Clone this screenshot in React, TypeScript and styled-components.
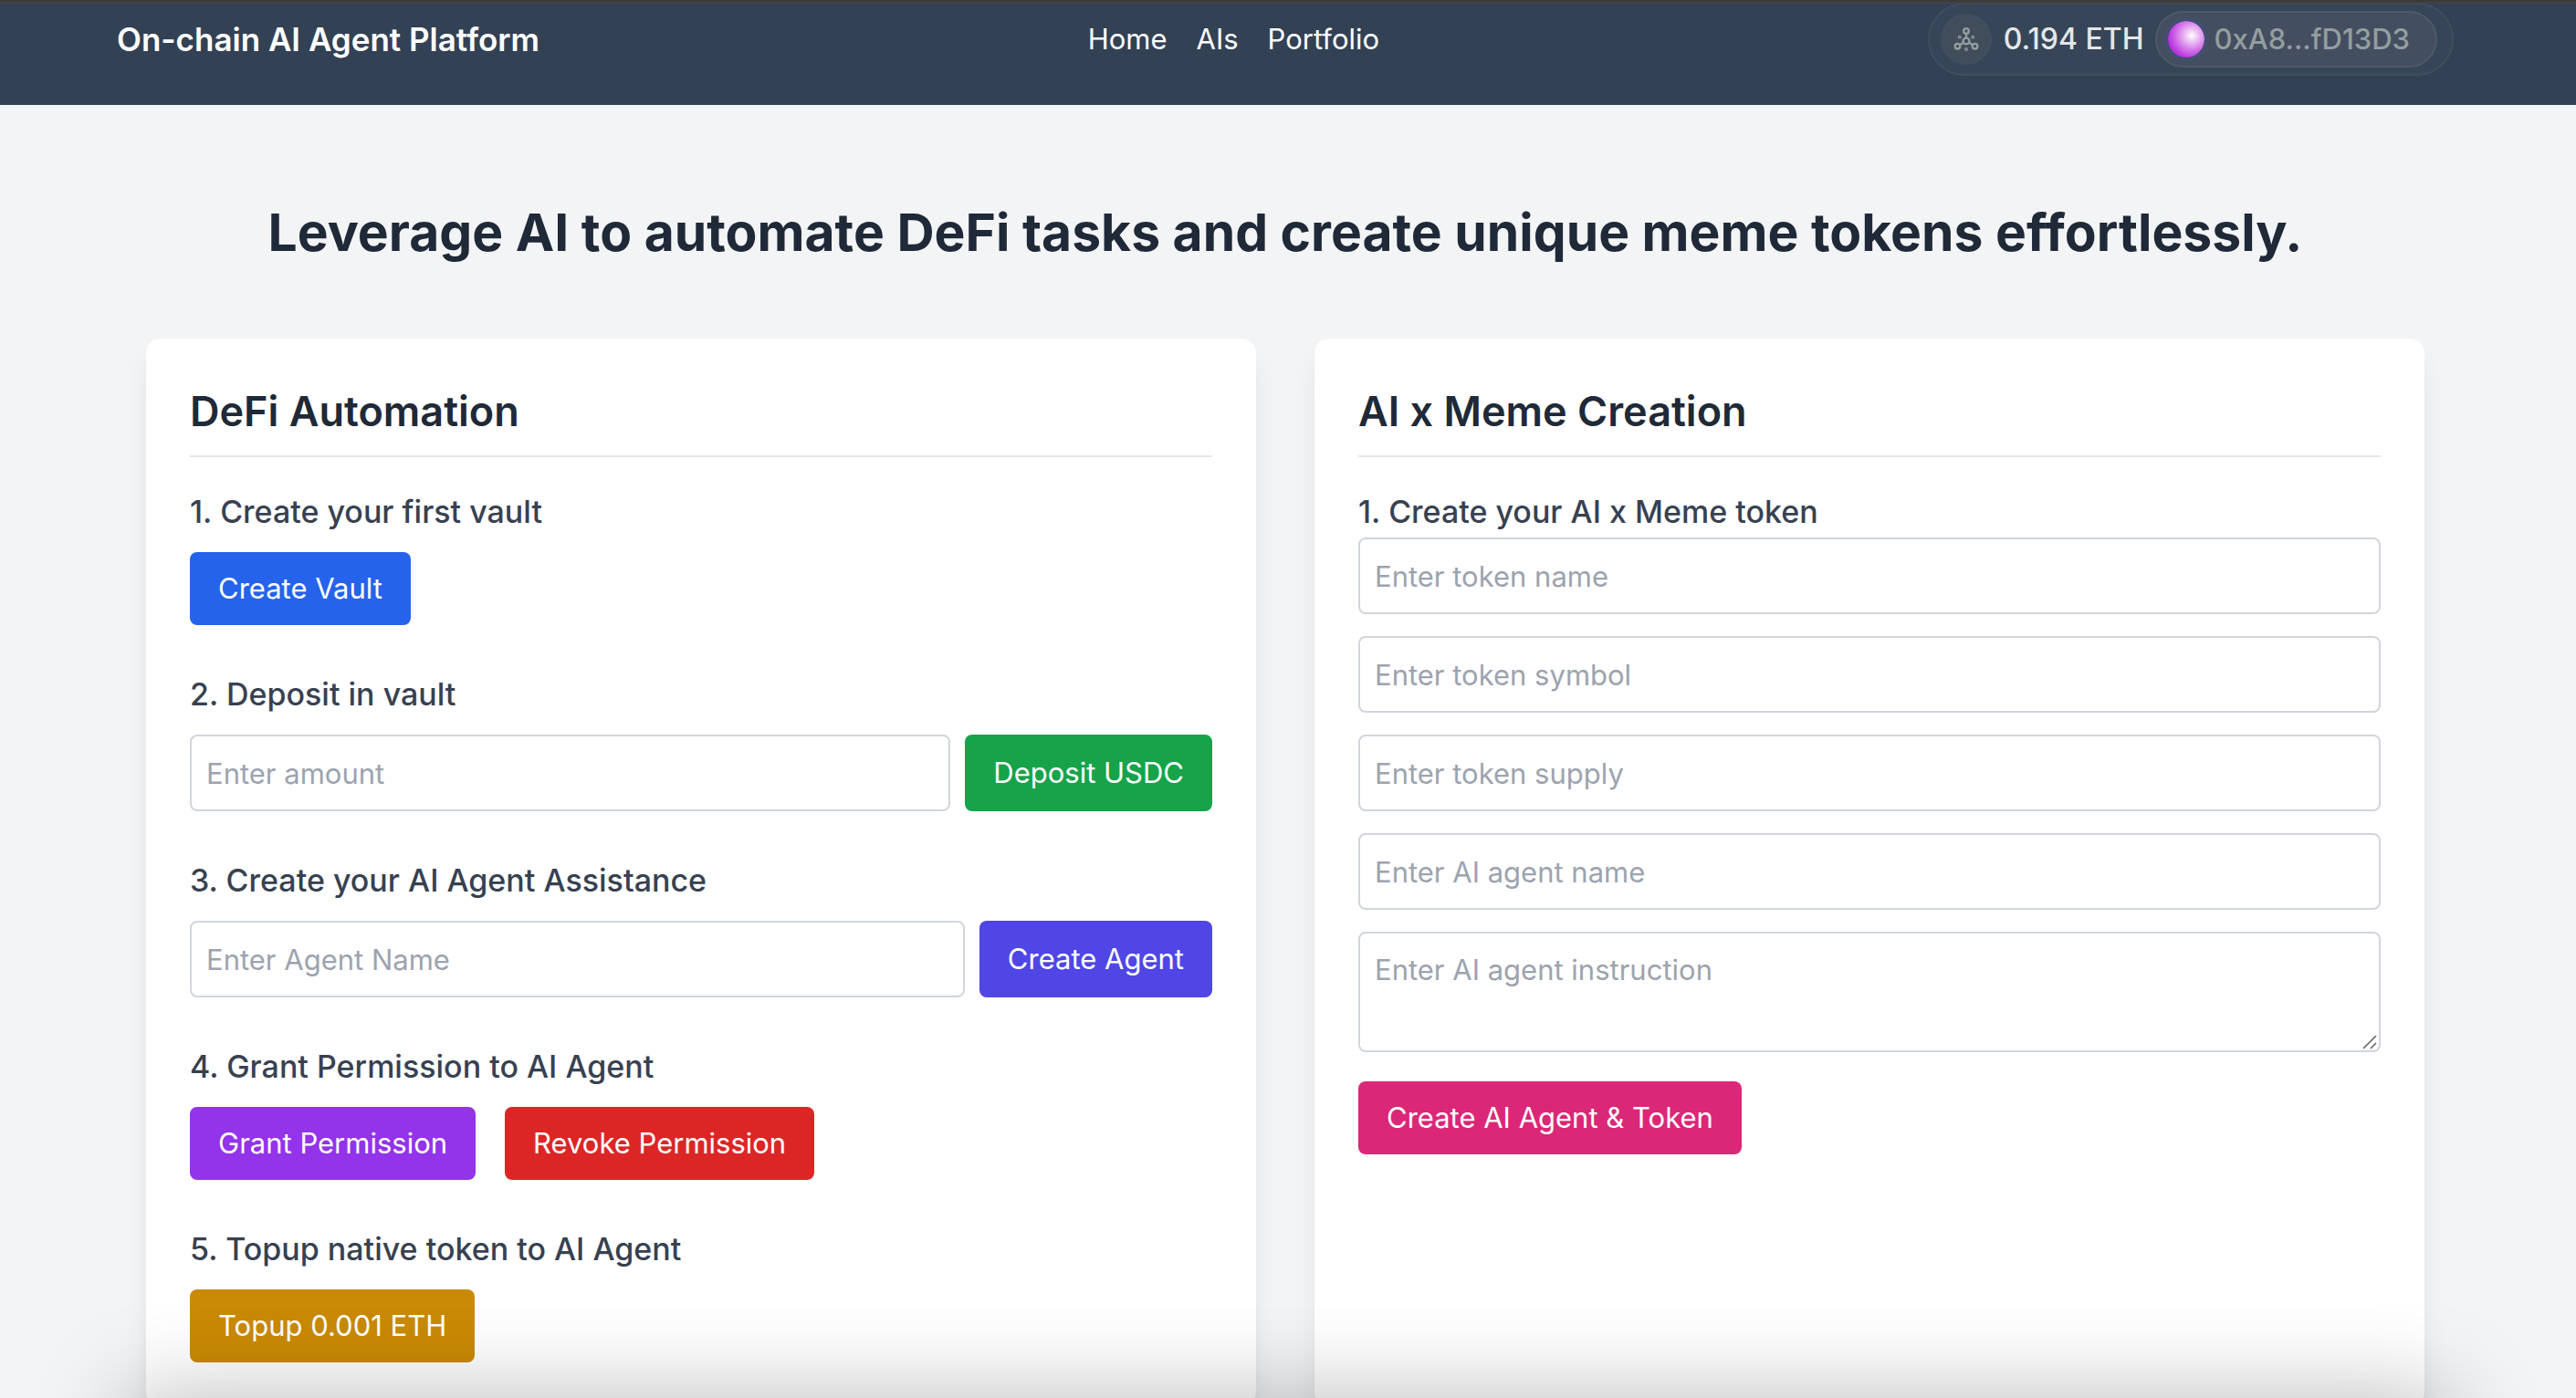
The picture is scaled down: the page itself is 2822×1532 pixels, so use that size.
import React from "react";
import styled, { createGlobalStyle } from "styled-components";

const GlobalStyle = createGlobalStyle`
  *, *::before, *::after { box-sizing: border-box; }
  html, body { margin: 0; padding: 0; }
  body {
    background: #f3f4f6;
    color: #1f2937;
    font-family: Inter, "Liberation Sans", Arial, sans-serif;
    font-size: 31px;
    line-height: 48px;
  }
  h1, h2, h3, p { margin: 0; }
  button, input, textarea { font: inherit; }
`;

const Page = styled.div`
  position: relative;
  height: 100vh;
  overflow: hidden;
`;

const TopEdge = styled.div`
  position: absolute;
  inset: 0 0 auto 0;
  height: 4px;
  background: #434343;
  border-top: 2px solid #3a3a3a;
  z-index: 2;
`;

const BottomShade = styled.div`
  position: absolute;
  left: 0;
  right: 0;
  bottom: 0;
  height: 100px;
  pointer-events: none;
  overflow: hidden;
  z-index: 2;

  &::after {
    content: "";
    position: absolute;
    left: 140px;
    right: 140px;
    top: 100px;
    height: 120px;
    box-shadow: 0 0 100px 4px rgba(0, 0, 0, 0.26);
  }
`;

const Header = styled.header`
  display: flex;
  align-items: center;
  justify-content: space-between;
  padding: 3px 134px 32px 128px;
  background: #334155;
  color: #ffffff;
`;

const Brand = styled.a`
  color: inherit;
  text-decoration: none;
  font-size: 35px;
  font-weight: 600;
`;

const Nav = styled.nav`
  display: flex;
  gap: 32px;
`;

const NavLink = styled.a`
  color: inherit;
  text-decoration: none;
`;

const Wallet = styled.div`
  display: flex;
  align-items: center;
  gap: 13px;
  height: 80px;
  padding: 0 16px 0 12px;
  border: 2px solid #3f4e5f;
  border-radius: 40px;
  background: #374558;
  color: #e4e7e7;
  font-size: 32px;
  font-weight: 500;
`;

const NetworkBadge = styled.span`
  display: grid;
  place-items: center;
  width: 56px;
  height: 56px;
  border: 4px solid #414e60;
  border-radius: 50%;
  background: #404d5b;
`;

const Account = styled.button`
  display: flex;
  align-items: center;
  gap: 6px;
  height: 62px;
  margin: 0;
  padding: 0 28px 0 8px;
  border: 2px solid #4d596a;
  border-radius: 31px;
  background: #434e61;
  color: #949e9e;
  font-size: 31px;
  font-weight: 500;
`;

const Orb = styled.span`
  width: 48px;
  height: 48px;
  border: 4px solid #434e70;
  border-radius: 50%;
  background: radial-gradient(circle at 65% 40%, #ffffff 0%, #f0cdf6 16%, #d77fea 42%, #b935df 70%, #b01fdc 100%) padding-box;
`;

const Main = styled.main`
  padding: 104px 166px 64px 160px;
`;

const Title = styled.h1`
  margin-bottom: 80px;
  text-align: center;
  font-size: 57px;
  line-height: 72px;
  font-weight: 700;
`;

const Columns = styled.div`
  display: grid;
  grid-template-columns: repeat(2, minmax(0, 1fr));
  gap: 64px;
`;

const Card = styled.section`
  padding: 48px;
  border-radius: 16px;
  background: #ffffff;
  box-shadow: 0 20px 30px -6px rgba(0, 0, 0, 0.1), 0 8px 12px -8px rgba(0, 0, 0, 0.1);
`;

const CardTitle = styled.h2`
  margin-bottom: 32px;
  padding-bottom: 16px;
  border-bottom: 2px solid #e5e7eb;
  font-size: 45px;
  line-height: 64px;
  font-weight: 600;
`;

const Steps = styled.div`
  display: grid;
  gap: 48px;
`;

const Step = styled.form<{ $gap?: number }>`
  display: flex;
  flex-direction: column;
  gap: ${(p) => p.$gap ?? 16}px;
`;

const StepTitle = styled.h3`
  color: #374151;
  font-size: 34px;
  line-height: 56px;
  font-weight: 500;
`;

const Row = styled.div<{ $gap?: number }>`
  display: flex;
  gap: ${(p) => p.$gap ?? 16}px;
`;

const Fields = styled.div`
  display: flex;
  flex-direction: column;
  gap: 24px;
  margin-bottom: 32px;
`;

const Input = styled.input`
  flex: 1;
  width: 100%;
  min-width: 0;
  padding: 16px;
  border: 2px solid #d1d5db;
  border-radius: 8px;
  background: #ffffff;
  color: #1f2937;
  line-height: 48px;
  height: 84px;

  &::placeholder { color: #9ca3af; opacity: 1; }
`;

const AreaWrap = styled.div`
  position: relative;
  display: flex;
`;

const Area = styled(Input)`
  display: block;
  height: 132px;
  resize: vertical;

  &::-webkit-resizer { display: none; }
`;

const Grip = styled.svg`
  position: absolute;
  right: 4px;
  bottom: 3px;
  pointer-events: none;
`;

const Button = styled.button<{ $color: string }>`
  flex: none;
  padding: 16px 31px;
  border: 0;
  border-radius: 8px;
  background: ${(p) => p.$color};
  color: #ffffff;
  cursor: pointer;
`;

const NetworkIcon = () => (
  <svg width="28" height="28" viewBox="0 0 28 28" fill="none" stroke="#949e9e" strokeWidth="2.3" aria-hidden="true">
    <circle cx="14" cy="5" r="2.8" />
    <circle cx="14" cy="16" r="3.4" />
    <circle cx="4.5" cy="21.7" r="2.8" />
    <circle cx="23.5" cy="21.7" r="2.8" />
    <path d="M14 7.8v4.8M11 17.8l-4 2.5M17 17.8l4 2.5" />
    <g strokeWidth="1.2">
      <circle cx="6.7" cy="11.7" r="1.3" />
      <circle cx="21.3" cy="11.7" r="1.3" />
      <circle cx="14" cy="25" r="1.3" />
    </g>
  </svg>
);

const stop = (e: React.FormEvent) => e.preventDefault();

const tokenFields = ["Enter token name", "Enter token symbol", "Enter token supply", "Enter AI agent name"];

export default function App() {
  return (
    <>
      <GlobalStyle />
      <Page>
        <TopEdge />
        <Header>
          <Brand href="#">On-chain AI Agent Platform</Brand>
          <Nav>
            <NavLink href="#home">Home</NavLink>
            <NavLink href="#ais">AIs</NavLink>
            <NavLink href="#portfolio">Portfolio</NavLink>
          </Nav>
          <Wallet>
            <NetworkBadge>
              <NetworkIcon />
            </NetworkBadge>
            <span>0.194 ETH</span>
            <Account type="button">
              <Orb />
              <span>0xA8...fD13D3</span>
            </Account>
          </Wallet>
        </Header>
        <Main>
          <Title>Leverage AI to automate DeFi tasks and create unique meme tokens effortlessly.</Title>
          <Columns>
            <Card>
              <CardTitle>DeFi Automation</CardTitle>
              <Steps>
                <Step onSubmit={stop}>
                  <StepTitle>1. Create your first vault</StepTitle>
                  <Row>
                    <Button $color="#2563eb">Create Vault</Button>
                  </Row>
                </Step>
                <Step onSubmit={stop}>
                  <StepTitle as="label" htmlFor="amount">2. Deposit in vault</StepTitle>
                  <Row>
                    <Input id="amount" placeholder="Enter amount" />
                    <Button $color="#16a34a">Deposit USDC</Button>
                  </Row>
                </Step>
                <Step onSubmit={stop}>
                  <StepTitle as="label" htmlFor="agent">3. Create your AI Agent Assistance</StepTitle>
                  <Row>
                    <Input id="agent" placeholder="Enter Agent Name" />
                    <Button $color="#4f46e5">Create Agent</Button>
                  </Row>
                </Step>
                <Step onSubmit={stop}>
                  <StepTitle>4. Grant Permission to AI Agent</StepTitle>
                  <Row $gap={32}>
                    <Button $color="#9333ea">Grant Permission</Button>
                    <Button $color="#dc2626">Revoke Permission</Button>
                  </Row>
                </Step>
                <Step onSubmit={stop}>
                  <StepTitle>5. Topup native token to AI Agent</StepTitle>
                  <Row>
                    <Button $color="#ca8a04">Topup 0.001 ETH</Button>
                  </Row>
                </Step>
              </Steps>
            </Card>
            <Card>
              <CardTitle>AI x Meme Creation</CardTitle>
              <Step $gap={0} onSubmit={stop}>
                <StepTitle>1. Create your AI x Meme token</StepTitle>
                <Fields>
                  {tokenFields.map((f) => (
                    <Row key={f}>
                      <Input aria-label={f} placeholder={f} />
                    </Row>
                  ))}
                  <AreaWrap>
                    <Area as="textarea" aria-label="Enter AI agent instruction" placeholder="Enter AI agent instruction" />
                    <Grip width="16" height="16" viewBox="0 0 16 16" stroke="#5f5f5f" strokeWidth="1.5" aria-hidden="true">
                      <path d="M1 15L15 1M9 15l6-6" />
                    </Grip>
                  </AreaWrap>
                </Fields>
                <Row>
                  <Button $color="#db2777">Create AI Agent &amp; Token</Button>
                </Row>
              </Step>
            </Card>
          </Columns>
        </Main>
        <BottomShade />
      </Page>
    </>
  );
}
